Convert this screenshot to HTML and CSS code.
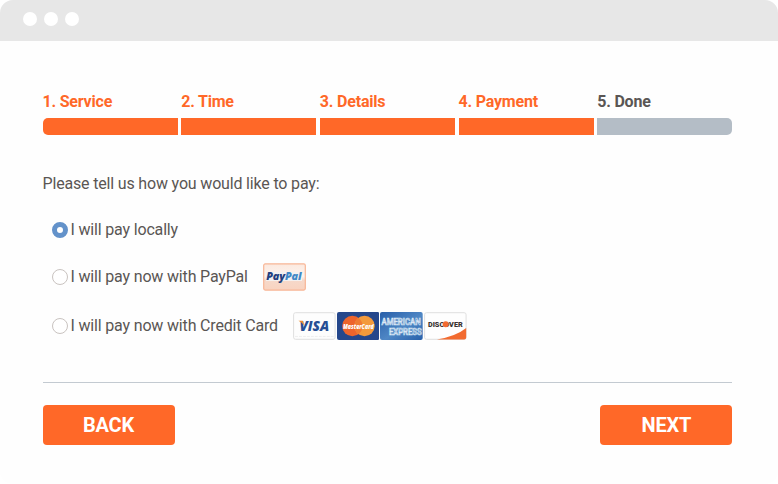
FILE: index.html
```html
<!DOCTYPE html>
<html lang="en">
<head>
    <meta charset="UTF-8">
    <meta name="viewport" content="width=device-width, initial-scale=1.0">
    <title>Booking - Payment</title>
    <link rel="stylesheet" href="styles.css">
</head>
<body>
    <div class="window">
        <header class="titlebar">
            <span class="dot"></span>
            <span class="dot"></span>
            <span class="dot"></span>
        </header>

        <form class="booking">
            <!-- progress tracker -->
            <div class="steps">
                <div class="step active">1. Service<div class="bar"></div></div>
                <div class="step active">2. Time<div class="bar"></div></div>
                <div class="step active">3. Details<div class="bar"></div></div>
                <div class="step active">4. Payment<div class="bar"></div></div>
                <div class="step">5. Done<div class="bar"></div></div>
            </div>

            <p class="prompt">Please tell us how you would like to pay:</p>

            <div class="options">
                <label class="option">
                    <input type="radio" name="payment" value="local" checked>
                    <span>I will pay locally</span>
                </label>
                <label class="option">
                    <input type="radio" name="payment" value="paypal">
                    <span>I will pay now with PayPal</span>
                    <svg class="paypal" width="43" height="28" viewBox="0 0 43 28">
                        <defs>
                            <linearGradient id="pp" x1="0" y1="0" x2="0" y2="1">
                                <stop offset="0" stop-color="#fbe9df"/>
                                <stop offset=".48" stop-color="#fdf3ee"/>
                                <stop offset=".62" stop-color="#f6d9ca"/>
                                <stop offset="1" stop-color="#f9d3c0"/>
                            </linearGradient>
                        </defs>
                        <rect x=".7" y=".9" width="41.6" height="26.2" rx="1.5" fill="url(#pp)" stroke="#f8b595" stroke-width="1.2"/>
                        <rect x="3" y="9" width="36" height="9" fill="#f4f1f0"/>
                        <text x="3.3" y="17.4" class="logo paypal-text" textLength="35" lengthAdjust="spacingAndGlyphs"><tspan fill="#243f7e">Pay</tspan><tspan fill="#4088c6">Pal</tspan></text>
                    </svg>
                </label>
                <label class="option">
                    <input type="radio" name="payment" value="card">
                    <span>I will pay now with Credit Card</span>
                    <span class="cards">
                        <!-- Visa -->
                        <svg width="43" height="28" viewBox="0 0 43 28">
                            <rect x=".6" y=".6" width="41.8" height="26.8" rx="2" fill="#fdfdfd" stroke="#dfdfdf"/>
                            <path d="M2 24.5H41" stroke="#eee" stroke-dasharray="3 1"/>
                            <text x="6.5" y="19" class="logo visa-text" textLength="30" lengthAdjust="spacingAndGlyphs">VISA</text>
                            <path d="M5.5 8.8h4.4l1.9 5.5Q9.5 10.6 5.5 8.8z" fill="#ee8d32"/>
                        </svg>
                        <!-- MasterCard -->
                        <svg width="43" height="28" viewBox="0 0 43 28">
                            <rect width="43" height="28" rx="2" fill="#25478b"/>
                            <circle cx="15.5" cy="14" r="10.3" fill="#ed642c"/>
                            <circle cx="27.7" cy="14" r="10.3" fill="#f39a3c"/>
                            <path d="M21.6 5.7a10.3 10.3 0 0 1 0 16.6a10.3 10.3 0 0 1 0-16.6z" fill="#ef7b32"/>
                            <text x="6" y="16.8" class="logo mc-text" textLength="31" lengthAdjust="spacingAndGlyphs">MasterCard</text>
                        </svg>
                        <!-- American Express -->
                        <svg width="43" height="28" viewBox="0 0 43 28">
                            <defs>
                                <linearGradient id="ax" x1="0" y1="0" x2="1" y2="1">
                                    <stop offset="0" stop-color="#285fa9"/>
                                    <stop offset=".55" stop-color="#4f87c5"/>
                                    <stop offset="1" stop-color="#2860aa"/>
                                </linearGradient>
                            </defs>
                            <rect width="43" height="28" rx="2" fill="url(#ax)"/>
                            <text x="1.5" y="12.5" class="amex-text" textLength="39.5" lengthAdjust="spacingAndGlyphs">AMERICAN</text>
                            <text x="9" y="22.7" class="amex-text" textLength="33" lengthAdjust="spacingAndGlyphs">EXPRESS</text>
                        </svg>
                        <!-- Discover -->
                        <svg width="43" height="28" viewBox="0 0 43 28">
                            <rect x=".6" y=".6" width="41.8" height="26.8" rx="2" fill="#fefefe" stroke="#dfdfdf"/>
                            <path d="M42.5 16V25.5q0 2-2 2H13Q32 24.5 42.5 16z" fill="#f26b30"/>
                            <text x="4" y="15" class="disc-text" textLength="35" lengthAdjust="spacingAndGlyphs">DISCOVER</text>
                            <circle cx="21.9" cy="12.2" r="3" fill="#f26b30"/>
                        </svg>
                    </span>
                </label>
            </div>

            <div class="actions">
                <button type="button" class="btn">BACK</button>
                <button type="button" class="btn">NEXT</button>
            </div>
        </form>
    </div>
</body>
</html>
```
FILE: styles.css
```css
* {
    box-sizing: border-box;
}
body {
    margin: 0;
    font-family: Roboto, "Liberation Sans", sans-serif;
    font-size: 16px;
    line-height: 20px;
    letter-spacing: -0.17px;
    color: #5a5654;
    background: #fff;
}
.window {
    height: 484px;
    border-radius: 13px;
    overflow: hidden;
    background: #fefefe;
}
.titlebar {
    display: flex;
    align-items: center;
    gap: 7px;
    height: 41px;
    padding: 0 22.5px 3px;
    background: #e7e7e7;
}
.dot {
    width: 14px;
    height: 14px;
    border-radius: 50%;
    background: #fff;
}
.booking {
    padding: 51px 45.6px 0 42.5px;
}

/* steps */
.steps {
    display: grid;
    grid-template-columns: repeat(5, 1fr);
    gap: 3.5px;
}
.step {
    font-weight: 700;
    letter-spacing: -0.2px;
}
.bar {
    height: 17px;
    margin-top: 6px;
    background: #b4bdc6;
}
.step.active {
    color: #ff6828;
}
.step.active .bar {
    background: #ff6828;
}
.step:first-child .bar {
    border-radius: 5px 0 0 5px;
}
.step:last-child .bar {
    border-radius: 0 5px 5px 0;
}

/* payment options */
.prompt {
    margin: 39px 0 0;
}
.options {
    padding: 13px 0 0 9.5px;
}
.option {
    display: flex;
    align-items: center;
    height: 48px;
}
.option:first-child {
    height: 46px;
}
.option:last-child {
    height: 50px;
}
.option input {
    appearance: none;
    width: 16px;
    height: 16px;
    margin: 0 2.5px 0 0;
    border: 1px solid #c9c3c0;
    border-radius: 50%;
    background: #fff;
}
.option input:checked {
    border: 5.5px solid #6392ca;
}
.paypal {
    margin-left: 15.3px;
}
.cards {
    display: flex;
    gap: 1px;
    margin-left: 15px;
    letter-spacing: 0;
}
.cards svg {
    width: 42.7px;
}
.logo {
    font-family: "Open Sans", "Liberation Sans", sans-serif;
    font-weight: 800;
    font-style: italic;
}
.paypal-text {
    font-size: 11px;
}
.visa-text {
    font-size: 14px;
    fill: #264f94;
}
.mc-text {
    font-size: 7px;
    fill: #fff;
}
.amex-text {
    font-size: 8.5px;
    font-weight: 500;
    fill: #3f79ba;
    stroke: #dbe8f5;
    stroke-width: .7px;
}
.disc-text {
    font-size: 8px;
    font-weight: 900;
    fill: #3a3432;
}

/* footer buttons */
.actions {
    display: flex;
    justify-content: space-between;
    margin-top: 31px;
    padding-top: 22px;
    border-top: 1px solid #c3cad1;
}
.btn {
    width: 132px;
    height: 40px;
    padding: 0;
    border: 0;
    border-radius: 4px;
    font-family: inherit;
    font-size: 20px;
    font-weight: 700;
    letter-spacing: -0.2px;
    color: #fff;
    background: #ff6828;
}
```
